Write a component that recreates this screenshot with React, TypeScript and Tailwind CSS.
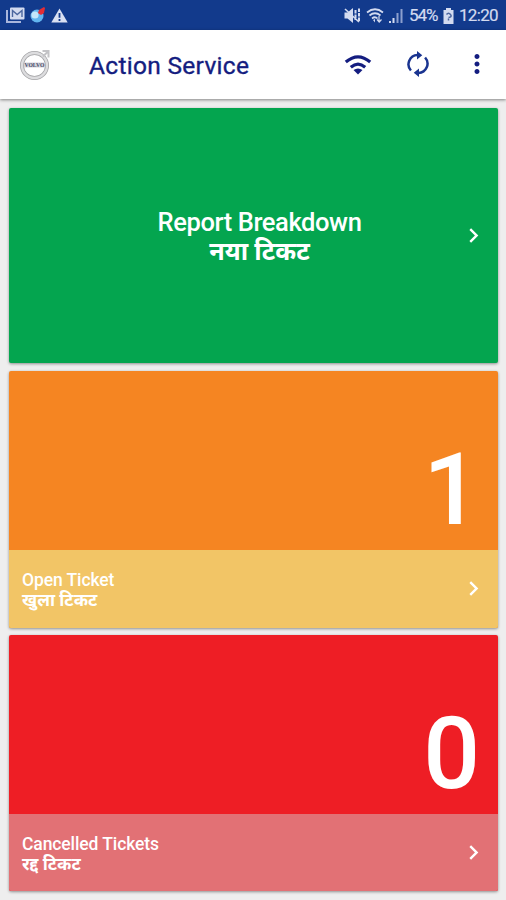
import React from "react";
import { MdChevronRight, MdMoreVert } from "react-icons/md";

const tickets = [
  {
    id: "open",
    count: 1,
    title: "Open Ticket",
    subtitle: "खुला टिकट",
    color: "bg-[#f58522]",
    footer: "bg-[#f2c566]",
    height: "h-[257px]",
  },
  {
    id: "cancelled",
    count: 0,
    title: "Cancelled Tickets",
    subtitle: "रद्द टिकट",
    color: "bg-[#ee1e25]",
    footer: "bg-[#e27175]",
    height: "h-[256px]",
  },
];

function StatusBar() {
  return (
    <div className="flex h-[30px] items-center justify-between bg-[#123a8c] pl-[6px] pr-[8px] text-[#d3dbf0]">
      <div className="flex items-center gap-[5px]">
        <svg width="19" height="16" viewBox="0 0 19 16">
          <path d="M1 3v12h14" fill="none" stroke="#a9b6dc" strokeWidth="2" />
          <rect x="4" y="0.5" width="14.5" height="12" rx="1" fill="#d3dbf0" />
          <path d="M6.5 10V3.500l4.700 4 4.800-4V10" fill="none" stroke="#4b669f" strokeWidth="1.4" />
        </svg>
        <svg width="16" height="16" viewBox="0 0 16 16">
          <circle cx="7" cy="9" r="6.5" fill="#62b5ef" />
          <circle cx="5" cy="8" r="3.6" fill="#c4e7fb" />
          <path d="M9 3l5-3 1 1-1 5-3 2-3-2z" fill="#e32d35" />
        </svg>
        <svg width="17" height="15" viewBox="0 0 17 15">
          <path d="M8.5 0.5L16.7 14.5H0.3z" fill="#d9e0f2" />
          <path d="M8.5 5v4.8M8.5 11v2" stroke="#123a8c" strokeWidth="1.8" />
        </svg>
      </div>
      <div className="flex items-center pt-[1px]">
        <svg width="17" height="17" viewBox="0 0 17 17">
          <path d="M0.500 5.500h3L9 1v15l-5.500-4.500h-3z" fill="currentColor" />
          <path d="M11.500 3v10M15 1.500v13" stroke="currentColor" strokeWidth="2" strokeDasharray="3.500 1" />
          <path d="M1 2l14 13" stroke="currentColor" strokeWidth="1.600" />
        </svg>
        <svg width="18" height="17" viewBox="0 0 18 17" className="ml-[5px] mr-[1px]">
          <path
            d="M1 5.500q8-6.500 16 0M3.500 8.500q5.500-4.500 11 0M6 11.500q3-2.500 5.500 0"
            fill="none"
            stroke="currentColor"
            strokeWidth="1.700"
          />
          <path d="M7 13l2 2.500V12z" fill="currentColor" />
          <path d="M13 9v5M11 12.500l2.200 2.500 2.300-2.500" fill="none" stroke="currentColor" strokeWidth="1.200" />
        </svg>
        <svg width="15" height="15" viewBox="0 0 15 15" className="ml-[4px]">
          <path d="M1 15v-2M4.500 15v-5" stroke="currentColor" strokeWidth="2" />
          <path d="M8.500 15V5M12.500 15V1" stroke="#8c9fce" strokeWidth="2" />
        </svg>
        <span className="ml-[5px] w-[29px] whitespace-nowrap text-[17px] tracking-[-1px] [-webkit-text-stroke:0.2px_#d3dbf0]">
          54%
        </span>
        <svg width="11" height="16" viewBox="0 0 11 16" className="ml-[5px]">
          <path d="M3 0h5v2h2.500v14H0.500V2H3z" fill="currentColor" />
          <path d="M3.500 6.500q2-2.500 4 0t-2 3M5.500 10.500v2" fill="none" stroke="#4b669f" strokeWidth="1.500" />
        </svg>
        <span className="ml-[5px] w-[39px] whitespace-nowrap text-[17px] tracking-[-0.7px] [-webkit-text-stroke:0.2px_#d3dbf0]">
          12:20
        </span>
      </div>
    </div>
  );
}

function Logo() {
  return (
    <svg width="32" height="32" viewBox="0 0 32 32">
      <circle cx="15.500" cy="16.500" r="12.500" fill="none" stroke="#a5a5a8" strokeWidth="4" />
      <circle cx="15.500" cy="16.500" r="12.500" fill="none" stroke="#dddddf" strokeWidth="2.400" />
      <path d="M23.500 2h6v6.500M24 7.500l5-5" fill="none" stroke="#c3c3c6" strokeWidth="2" />
      <rect x="5" y="13.500" width="21" height="5" fill="#d3d4dc" />
      <text
        x="15.500"
        y="18"
        textAnchor="middle"
        textLength="20"
        lengthAdjust="spacingAndGlyphs"
        fontSize="5.500"
        fontWeight="700"
        fontFamily="Liberation Serif, serif"
        fill="#4a4d69"
      >
        VOLVO
      </text>
    </svg>
  );
}

function Header() {
  return (
    <div className="relative flex h-[69px] items-center bg-white pl-[19px] shadow-[0_1px_3px_rgba(0,0,0,0.45)]">
      <Logo />
      <h1 className="ml-[38px] mt-[3px] flex-1 whitespace-nowrap text-[24.500px] font-normal tracking-[0.3px] text-[#141d80] [-webkit-text-stroke:0.35px_#141d80]">
        Action Service
      </h1>
      <svg width="28" height="22" viewBox="0 0 28 22" className="mr-[35px]">
        <path
          d="M1.800 8Q14-2.300 26.200 8M6.800 13.200Q14 7 21.200 13.200"
          fill="none"
          stroke="#141d80"
          strokeWidth="3.200"
        />
        <path d="M9.500 16q4.500-3 9 0L14 20.500z" fill="#141d80" />
      </svg>
      <svg width="22" height="26" viewBox="0 0 22 26" className="mr-[33px] mt-[-2px]">
        <path
          d="M3.900 19.500A9.300 9.300 0 0 1 10.500 4M18.100 6.500A9.300 9.300 0 0 1 11.500 22"
          fill="none"
          stroke="#1a3490"
          strokeWidth="2.500"
        />
        <path d="M10 0l5.300 4.200L10 8.500zM12 17.500v8.500l-5.300-4.200z" fill="#1a3490" />
      </svg>
      <MdMoreVert className="mr-[14px] mt-[-1px] text-[30px] text-[#141d80]" />
    </div>
  );
}

function App() {
  return (
    <div
      lang="hi"
      className="h-[900px] w-[506px] overflow-hidden bg-[#eeeeee] font-['Roboto','Noto_Sans',sans-serif]"
    >
      <StatusBar />
      <Header />
      <div className="flex flex-col pl-[9px] pr-[8px] pt-[9px] text-white">
        <div className="flex h-[255px] items-center rounded-[2px] bg-[#04a54f] shadow-[0_1px_3px_rgba(0,0,0,0.4)]">
          <div className="flex-1 pl-[51px] pt-[2px] text-center">
            <p className="text-[25.500px] font-medium leading-[29px] tracking-[-0.4px]">Report Breakdown</p>
            <p className="text-[25.200px] font-bold leading-[29px]">नया टिकट</p>
          </div>
          <MdChevronRight className="mr-[10px] text-[29px]" />
        </div>
        {tickets.map((item) => (
          <div
            className={`mt-[7.500px] flex flex-col overflow-hidden rounded-[2px] shadow-[0_1px_3px_rgba(0,0,0,0.4)] ${item.color} ${item.height}`}
            key={item.id}
          >
            <div className="flex h-[179px] items-end justify-end pb-[2px] pr-[18px]">
              <span className="text-[100px] font-medium leading-[117px]">{item.count}</span>
            </div>
            <div className={`flex flex-1 items-center justify-between pl-[13px] pr-[10px] ${item.footer}`}>
              <div className="pt-[2px] leading-[20px]">
                <p className="text-[17.500px] font-medium tracking-[-0.1px]">{item.title}</p>
                <p className="text-[17.300px] font-bold">{item.subtitle}</p>
              </div>
              <MdChevronRight className="text-[29px]" />
            </div>
          </div>
        ))}
      </div>
    </div>
  );
}

export default App;
